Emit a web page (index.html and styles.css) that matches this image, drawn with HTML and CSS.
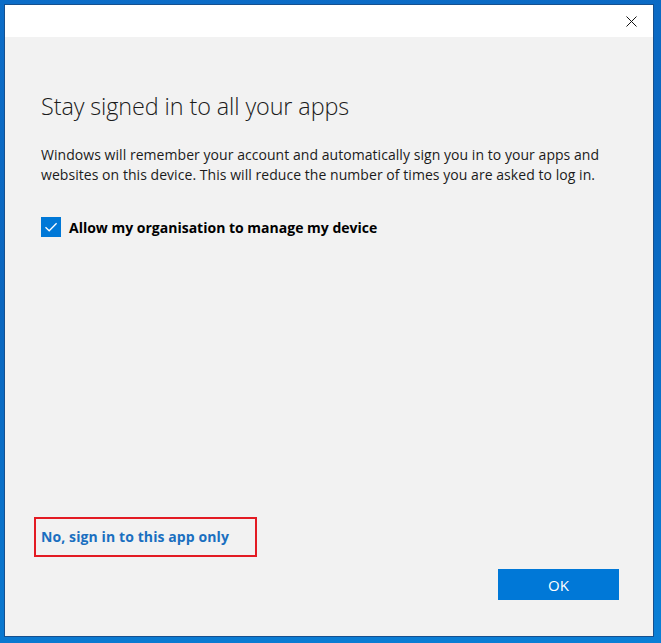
FILE: index.html
```html
<!DOCTYPE html>
<html lang="en">
<head>
<meta charset="utf-8">
<title>Stay signed in to all your apps</title>
<link rel="stylesheet" href="styles.css">
</head>
<body>
  <div class="window">
    <div class="titlebar">
      <button class="close" aria-label="Close">
        <svg width="11" height="11" viewBox="0 0 11 11"><path d="M0.5 0.5 L10.5 10.5 M10.5 0.5 L0.5 10.5" stroke="#111" stroke-width="1" fill="none"/></svg>
      </button>
    </div>
    <div class="content">
      <div class="main">
        <h1 class="heading">Stay signed in to all your apps</h1>
        <p class="desc">Windows will remember your account and automatically sign you in to your apps and websites on this device. This will reduce the number of times you are asked to log in.</p>
        <label class="check">
          <span class="box">
            <svg width="20" height="20" viewBox="0 0 20 20"><path d="M4.5 10.2 L8.2 13.8 L15.6 6.2" stroke="#fff" stroke-width="1.3" fill="none"/></svg>
          </span>
          <span class="check-label">Allow my organisation to manage my device</span>
        </label>
      </div>
      <div class="footer">
        <div class="highlight"><a class="link" href="#">No, sign in to this app only</a></div>
        <div class="actions"><button class="ok">OK</button></div>
      </div>
    </div>
  </div>
</body>
</html>
```
FILE: styles.css
```css
html, body {
  margin: 0;
  height: 100%;
}
body {
  padding: 4px 7px 6px 4px;
  box-sizing: border-box;
  background: linear-gradient(170deg, #0c6dc8 0%, #0a66bf 40%, #0a7fd6 100%);
  font-family: "Open Sans", "Liberation Sans", sans-serif;
  color: #000;
}
.window {
  border: 1px solid #15508f;
  height: 100%;
  box-sizing: border-box;
  display: flex;
  flex-direction: column;
  background: #f2f2f2;
}
.titlebar {
  height: 32px;
  background: #fff;
  display: flex;
  justify-content: flex-end;
  align-items: center;
}
.close {
  border: 0;
  background: transparent;
  width: 46px;
  height: 32px;
  padding: 0;
  display: flex;
  align-items: center;
  justify-content: center;
}
.close svg { display: block; margin-left: 2px; margin-top: 1px; }
.content {
  flex: 1;
  display: flex;
  flex-direction: column;
  justify-content: space-between;
  padding: 0 34px 36px 36px;
}
.heading {
  margin: 54px 0 0;
  font-weight: 300;
  font-size: 23.4px;
  line-height: 30px;
  letter-spacing: -0.1px;
  color: #1b1b1b;
}
.desc {
  margin: 24px 0 0;
  font-size: 14px;
  line-height: 20px;
  letter-spacing: 0.05px;
  color: #1b1b1b;
}
.check {
  margin-top: 32px;
  display: flex;
  align-items: center;
  gap: 8px;
}
.box {
  width: 20px;
  height: 20px;
  background: #0078d7;
  display: block;
}
.box svg { display: block; }
.check-label {
  font-weight: 700;
  font-size: 14px;
  color: #000;
}
.footer {
  display: flex;
  flex-direction: column;
}
.highlight {
  align-self: flex-start;
  box-sizing: border-box;
  margin-left: -7px;
  width: 223px;
  height: 40px;
  border: 2px solid #e31b23;
  display: flex;
  align-items: center;
  padding-left: 5px;
}
.link {
  font-weight: 700;
  font-size: 14px;
  letter-spacing: 0.1px;
  color: #1a6fc0;
  text-decoration: none;
  margin-top: -2px;
}
.actions {
  display: flex;
  justify-content: flex-end;
  margin-top: 12px;
}
.ok {
  width: 121px;
  height: 31px;
  border: 0;
  background: #0078d7;
  color: #fff;
  font-family: "Open Sans", "Liberation Sans", sans-serif;
  font-size: 15px;
  padding: 0;
}
```
